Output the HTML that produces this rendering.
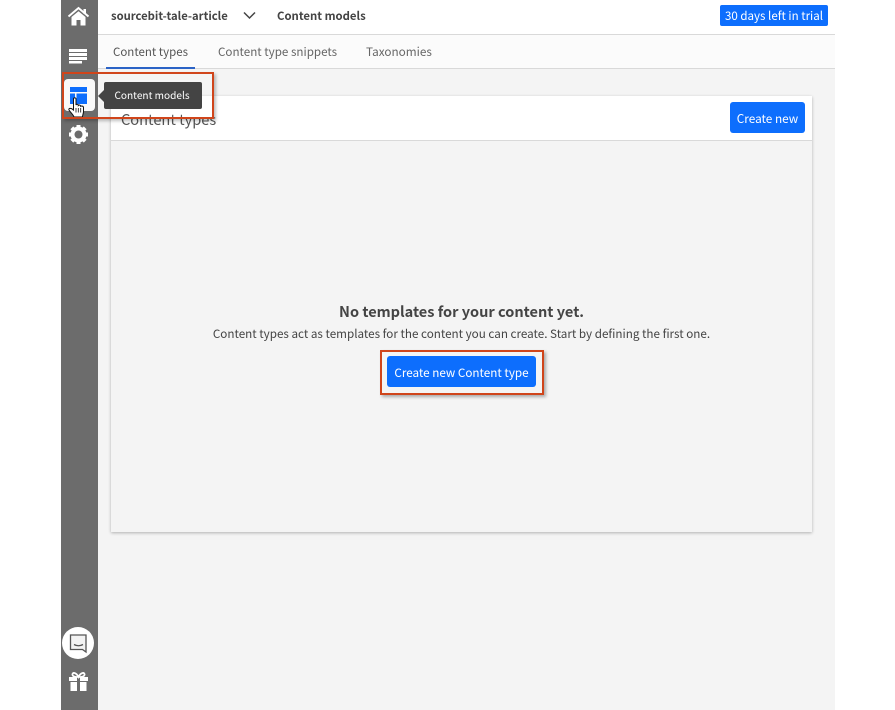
<!DOCTYPE html>
<html><head><meta charset="utf-8">
<style>
html,body{margin:0;padding:0;background:#fff}
body{width:895px;height:710px;position:relative;overflow:hidden;font-family:"Noto Sans CJK JP","Liberation Sans",sans-serif;color:#444}
.a{position:absolute;white-space:nowrap}
.btn{background:#0d6efd;color:#fff;border-radius:3px;text-align:center}
svg{position:absolute;overflow:visible}
</style></head>
<body>
<div class="a" style="left:61px;top:0;width:37px;height:710px;background:#6c6c6c"></div>
<div class="a" style="left:98px;top:0;width:737px;height:710px;background:#f4f4f4"></div>
<div class="a" style="left:98px;top:0;width:737px;height:34px;background:#fff;border-bottom:1px solid #d9d9d9"></div>
<div class="a" style="left:98px;top:35px;width:737px;height:33px;background:#fbfbfb;border-bottom:1px solid #d9d9d9"></div>

<div class="a" style="left:111px;top:7px;font-size:11.25px;line-height:18px;font-weight:700;color:#444">sourcebit-tale-article</div>
<svg style="left:243px;top:11px" width="14" height="9"><path d="M1 1.500L6.500 7L12 1.500" fill="none" stroke="#444" stroke-width="1.500"/></svg>
<div class="a" style="left:277px;top:7px;font-size:11.35px;line-height:18px;font-weight:700;color:#444">Content models</div>
<div class="a btn" style="left:720px;top:5px;width:108px;height:21px;line-height:23px;font-size:11.55px;border-radius:2px">30 days left in trial</div>

<div class="a" style="left:113px;top:43px;font-size:11.5px;line-height:18px;color:#555">Content types</div>
<div class="a" style="left:106px;top:67px;width:89px;height:2px;background:#2b63c6"></div>
<div class="a" style="left:218px;top:43px;font-size:11.63px;line-height:18px;color:#666">Content type snippets</div>
<div class="a" style="left:366px;top:43px;font-size:11.75px;line-height:18px;color:#666">Taxonomies</div>

<div class="a" style="left:111px;top:96px;width:701px;height:436px;background:#f4f4f4;box-shadow:0 1px 3px rgba(0,0,0,.28)"></div>
<div class="a" style="left:111px;top:96px;width:701px;height:44px;background:#fff;border-bottom:1px solid #d9d9d9"></div>
<div class="a" style="left:121px;top:109px;font-size:14.6px;line-height:22px;color:#555">Content types</div>
<div class="a btn" style="left:730px;top:102px;width:75px;height:31px;line-height:33px;font-size:11.8px">Create new</div>

<div class="a" style="left:111px;top:301px;width:701px;text-align:center;font-size:14.55px;line-height:22px;font-weight:700;color:#444">No templates for your content yet.</div>
<div class="a" style="left:111px;top:325px;width:701px;text-align:center;font-size:11.67px;line-height:18px;color:#444">Content types act as templates for the content you can create. Start by defining the first one.</div>
<div class="a" style="left:380px;top:350px;width:160px;height:41px;border:2px solid #d0451b;box-shadow:2px 2px 3px rgba(0,0,0,.3)"></div>
<div class="a btn" style="left:387px;top:356px;width:149px;height:31px;line-height:33px;font-size:11.7px">Create new Content type</div>

<!-- home -->
<svg style="left:68px;top:7px" width="21" height="19" viewBox="0 0 21 19"><path d="M0.500 9.500L10.500 1L20.500 9.500" fill="none" stroke="#fff" stroke-width="2"/><path d="M3.500 10L10.500 4.200L17.500 10V18.500H12.500V13H8.500V18.500H3.500Z" fill="#fff"/><rect x="15.500" y="2" width="2.500" height="5" fill="#fff"/></svg>
<!-- list -->
<svg style="left:69px;top:49px" width="19" height="15"><rect width="18" height="3" fill="#fff"/><rect y="4" width="18" height="3" fill="#fff"/><rect y="8" width="18" height="3" fill="#fff"/><rect y="12" width="13" height="2.500" fill="#fff"/></svg>
<!-- active -->
<div class="a" style="left:64px;top:79px;width:31px;height:32px;background:#f9f9f9;border-radius:4px"></div>
<svg style="left:70px;top:87px" width="18" height="18"><rect width="17" height="5" fill="#0d6efd"/><rect y="6.500" width="5" height="10.500" fill="#0d6efd"/><rect x="6.500" y="6.500" width="10.500" height="10.500" fill="#0d6efd"/></svg>
<!-- cursor -->
<svg style="left:68px;top:97px" width="17" height="21" viewBox="0 0 17 21"><path d="M5.500 1.800C5.500 .5 8 .5 8 1.800V8C8.500 7 10.300 7 10.300 8.500C11 7.700 12.700 8 12.700 9.300C13.500 8.700 15.500 9 15.500 10.500V14.500C15.500 16.500 14.500 18 14.500 20H6C5.500 18 2.500 15.500 1 13C.2 11.500 2.500 10.300 5.500 13Z" fill="#fff" stroke="#111" stroke-width="1"/><path d="M8 11V15.500M10.300 11V15.500M12.700 11V15.500" stroke="#111" stroke-width=".8"/></svg>
<!-- gear -->
<svg style="left:68px;top:124px" width="21" height="21" viewBox="0 0 21 21"><circle cx="10.500" cy="10.500" r="6" fill="none" stroke="#fff" stroke-width="4"/><g stroke="#fff" stroke-width="4"><path d="M10.500 1V4M10.500 17V20M1 10.500H4M17 10.500H20M3.800 3.800L6 6M15 15L17.200 17.200M3.800 17.200L6 15M15 6L17.200 3.800"/></g></svg>

<!-- tooltip -->
<div class="a" style="left:104px;top:82px;width:98px;height:27px;background:#444;border-radius:2px;color:#fff;font-size:10.1px;line-height:25px;text-align:center;text-indent:-2px">Content models</div>
<div class="a" style="left:98px;top:90px;width:0;height:0;border:6px solid transparent;border-left:0;border-right:6px solid #444"></div>
<div class="a" style="left:62px;top:72px;width:148px;height:43px;border:2px solid #d0451b;box-shadow:2px 2px 3px rgba(0,0,0,.25)"></div>

<!-- chat -->
<div class="a" style="left:62px;top:627px;width:32px;height:32px;background:#fff;border-radius:50%"></div>
<svg style="left:69px;top:634px" width="18" height="20" viewBox="0 0 18 20"><path d="M1.500 1H17V18L13.500 15.500H1.500Z" fill="#f3f3f3" stroke="#555" stroke-width="1.300"/><path d="M5 10.500Q9.500 13 14 10.500" fill="none" stroke="#555" stroke-width="1.300"/></svg>
<!-- gift -->
<svg style="left:69px;top:672px" width="19" height="20" viewBox="0 0 19 20"><path d="M9.500 5C7 0 3 0 3.500 3C3.800 4.500 6 5 9.500 5C13 5 15.200 4.500 15.500 3C16 0 12 0 9.500 5Z" fill="none" stroke="#fff" stroke-width="1.800"/><rect x="0" y="5" width="8" height="4" fill="#fff"/><rect x="11" y="5" width="8" height="4" fill="#fff"/><rect x="1.500" y="10" width="6.500" height="9" fill="#fff"/><rect x="11" y="10" width="6.500" height="9" fill="#fff"/></svg>
</body></html>
